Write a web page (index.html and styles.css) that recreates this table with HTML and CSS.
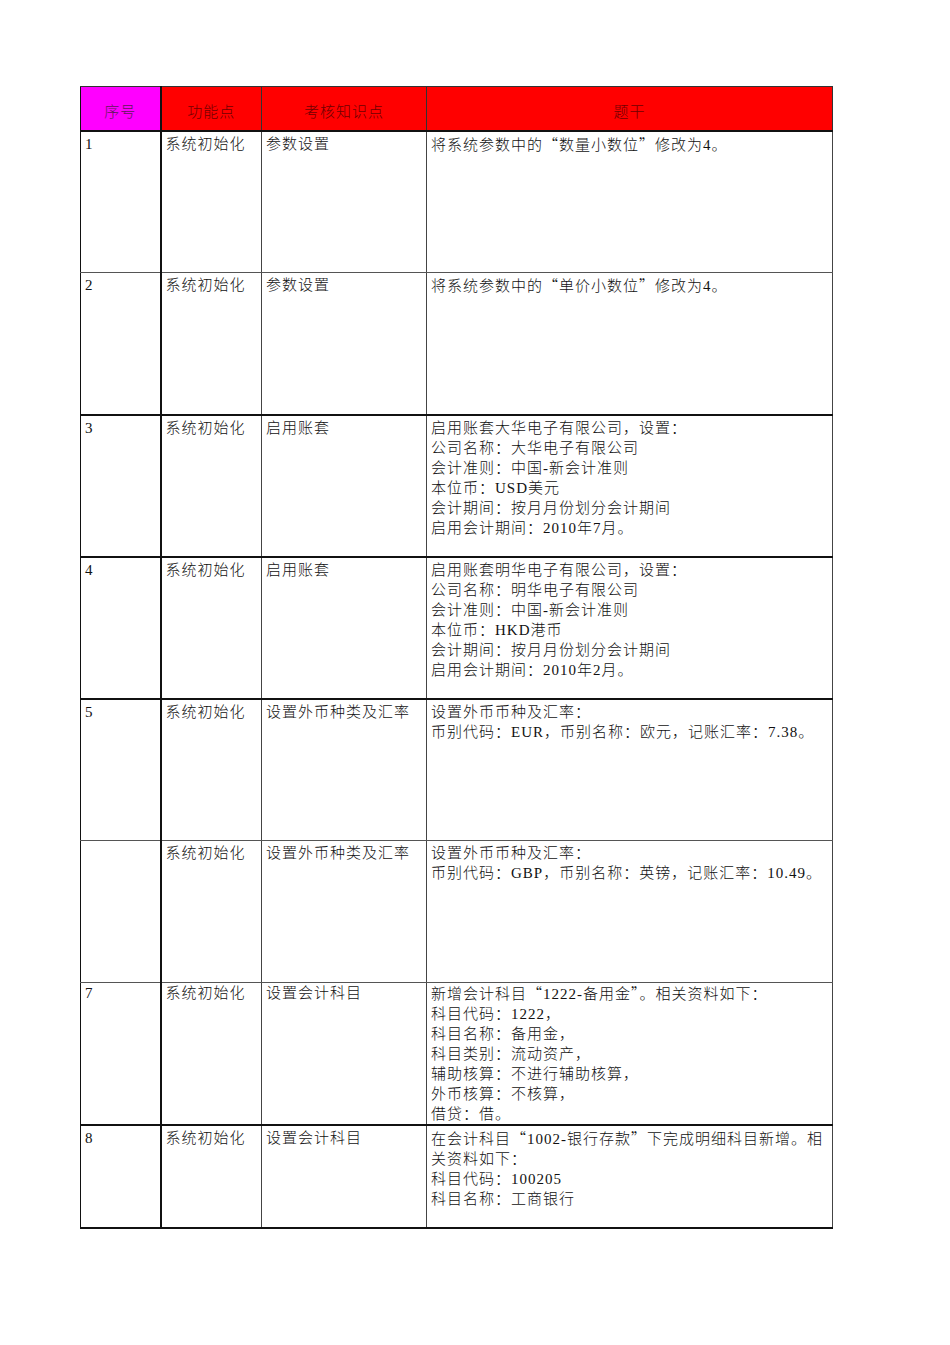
FILE: index.html
```html
<!DOCTYPE html>
<html lang="zh-CN">
<head>
<meta charset="utf-8">
<title>考核知识点</title>
<link rel="stylesheet" href="styles.css">
</head>
<body>
<table class="sheet">
  <colgroup>
    <col class="c-no">
    <col class="c-func">
    <col class="c-point">
    <col class="c-stem">
  </colgroup>
  <thead>
    <tr class="head">
      <th class="h-no">序号</th>
      <th>功能点</th>
      <th>考核知识点</th>
      <th>题干</th>
    </tr>
  </thead>
  <tbody>
    <tr class="row">
      <td class="no">1</td>
      <td>系统初始化</td>
      <td>参数设置</td>
      <td>将系统参数中的<span class="q">“</span>数量小数位<span class="q">”</span>修改为4。</td>
    </tr>
    <tr class="row">
      <td class="no">2</td>
      <td>系统初始化</td>
      <td>参数设置</td>
      <td>将系统参数中的<span class="q">“</span>单价小数位<span class="q">”</span>修改为4。</td>
    </tr>
    <tr class="row thick">
      <td class="no">3</td>
      <td>系统初始化</td>
      <td>启用账套</td>
      <td>启用账套大华电子有限公司，设置：<br>公司名称：大华电子有限公司<br>会计准则：中国-新会计准则<br>本位币：USD美元<br>会计期间：按月月份划分会计期间<br>启用会计期间：2010年7月。</td>
    </tr>
    <tr class="row thick">
      <td class="no">4</td>
      <td>系统初始化</td>
      <td>启用账套</td>
      <td>启用账套明华电子有限公司，设置：<br>公司名称：明华电子有限公司<br>会计准则：中国-新会计准则<br>本位币：HKD港币<br>会计期间：按月月份划分会计期间<br>启用会计期间：2010年2月。</td>
    </tr>
    <tr class="row thick">
      <td class="no">5</td>
      <td>系统初始化</td>
      <td>设置外币种类及汇率</td>
      <td>设置外币币种及汇率：<br>币别代码：EUR，币别名称：欧元，记账汇率：7.38。</td>
    </tr>
    <tr class="row">
      <td class="no"></td>
      <td>系统初始化</td>
      <td>设置外币种类及汇率</td>
      <td>设置外币币种及汇率：<br>币别代码：GBP，币别名称：英镑，记账汇率：10.49。</td>
    </tr>
    <tr class="row full">
      <td class="no">7</td>
      <td>系统初始化</td>
      <td>设置会计科目</td>
      <td>新增会计科目<span class="q">“</span>1222-备用金<span class="q">”</span>。相关资料如下：<br>科目代码：1222，<br>科目名称：备用金，<br>科目类别：流动资产，<br>辅助核算：不进行辅助核算，<br>外币核算：不核算，<br>借贷：借。</td>
    </tr>
    <tr class="row thick last">
      <td class="no">8</td>
      <td>系统初始化</td>
      <td>设置会计科目</td>
      <td>在会计科目<span class="q">“</span>1002-银行存款<span class="q">”</span>下完成明细科目新增。相<br>关资料如下：<br>科目代码：100205<br>科目名称：工商银行</td>
    </tr>
  </tbody>
</table>
</body>
</html>
```

FILE: styles.css
```css
html, body {
  margin: 0;
  padding: 0;
  background: #ffffff;
}

body {
  padding: 86px 0 0 80px;
  font-family: "Liberation Serif", "Noto Sans CJK SC", serif;
  font-size: 15px;
  font-weight: 300;
  color: #111111;
}

.sheet {
  border-collapse: collapse;
  table-layout: fixed;
  width: 752px;
}

.c-no { width: 80px; }
.c-func { width: 101px; }
.c-point { width: 165px; }
.c-stem { width: 406px; }

.head th {
  box-sizing: border-box;
  height: 44px;
  background: #ff0000;
  color: #6e0000;
  font-weight: 300;
  font-size: 15px;
  letter-spacing: 1px;
  text-align: center;
  vertical-align: middle;
  padding: 5px 0 0 0;
  border: 1px solid #333333;
  border-bottom: 2px solid #111111;
  line-height: 20px;
  font-family: "Noto Sans CJK SC", sans-serif;
}

.head th.h-no {
  background: #ff00ff;
  color: #601a5a;
  border-left: 1px solid #111111;
  border-right: 2px solid #111111;
}

.row td {
  height: 142px;
  box-sizing: border-box;
  vertical-align: top;
  padding: 2px 4px 0 4px;
  line-height: 20px;
  letter-spacing: 1px;
  white-space: nowrap;
  overflow: hidden;
  border-left: 1px solid #444444;
  border-right: 1px solid #444444;
  border-top: 1px solid #555555;
  border-bottom: 1px solid #555555;
}

.row td.no {
  border-left: 1px solid #111111;
  border-right: 2px solid #111111;
  letter-spacing: 0;
}

.row.full td {
  padding-top: 0;
}

.row.thick td {
  border-top: 2px solid #111111;
}

.row.last td {
  height: 103px;
  border-bottom: 2px solid #111111;
}

.q {
  font-family: "Noto Sans CJK SC", sans-serif;
}
```
